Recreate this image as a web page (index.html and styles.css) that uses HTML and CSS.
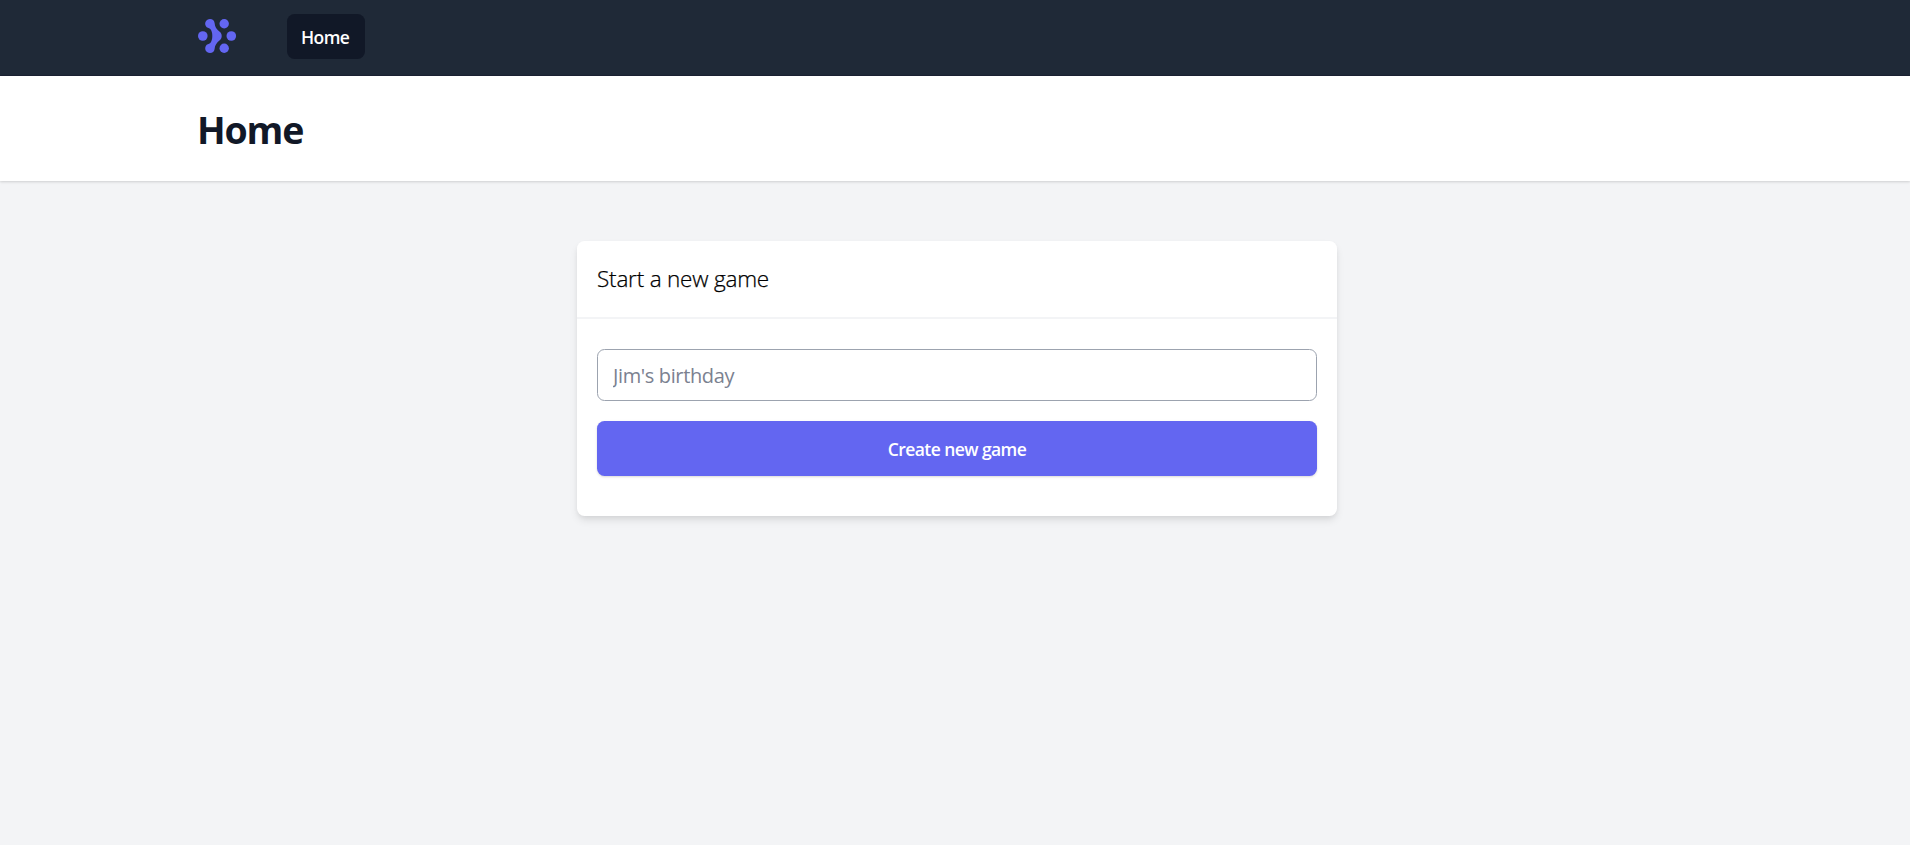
FILE: index.html
```html
<!DOCTYPE html>
<html lang="en">
<head>
<meta charset="utf-8">
<title>Home</title>
<link rel="stylesheet" href="styles.css">
</head>
<body>
<nav class="nav">
  <svg class="logo" viewBox="0 0 40 40" fill="currentColor" aria-hidden="true">
    <circle cx="4.8" cy="20" r="4.8"/>
    <circle cx="26.2" cy="7.7" r="4.7"/>
    <circle cx="33.3" cy="20" r="4.8"/>
    <circle cx="26.2" cy="32.3" r="4.7"/>
    <path d="M7.8 10C6.2 7 8 3 12 3C14.5 3 16.3 4.6 16.6 7C16.9 11 18.500 13 22 16C23.100 17 23.700 18.300 23.700 20S23.100 23 22 24C18.500 27 16.900 29 16.600 33C16.300 35.400 14.500 37 12 37C8 37 6.200 33 7.800 30C8.900 28 10.800 28.200 12.300 27C15 24.500 15 15.500 12.300 13C10.800 11.800 8.900 12 7.800 10Z"/>
  </svg>
  <a class="nav-link" href="#">Home</a>
</nav>
<header class="header"><h1 class="title">Home</h1></header>
<main class="main">
  <section class="card">
    <h2 class="card-title">Start a new game</h2>
    <form class="form">
      <input class="field" type="text" placeholder="Jim's birthday">
      <button class="button" type="button"><span class="label">Create new game</span></button>
    </form>
  </section>
</main>
</body>
</html>
```
FILE: styles.css
```css
* { box-sizing: border-box; margin: 0; }
body { min-height: 100vh; background: #f3f4f6; color: #000; font-family: "Open Sans", "Noto Sans", sans-serif; }
.nav { display: flex; align-items: flex-start; height: 76px; padding: 14px 198px 0; background: #1f2937; border-bottom: 1px solid #1c2233; }
.logo { width: 40px; height: 40px; margin: 2px 49px 0 0; color: #6366f1; }
.nav-link { width: 78px; height: 45px; padding-left: 14px; border-radius: 7.5px; background: #111827; color: #fff; font-size: 17.5px; font-weight: 600; line-height: 47px; letter-spacing: -.6px; text-decoration: none; }
.header { position: relative; height: 105px; padding: 29px 197px; background: #fff; box-shadow: 0 1px 3px rgba(0,0,0,.1), 0 1px 2px rgba(0,0,0,.06); }
.title { color: #111827; font-size: 37.5px; font-weight: 700; line-height: 50px; letter-spacing: -1.2px; }
.main { padding: 60px 0 0 577px; }
.card { width: 760px; height: 275px; border-radius: 7.5px; background: #fff; box-shadow: 0 5px 8px -1px rgba(0,0,0,.1), 0 2px 5px -1px rgba(0,0,0,.06); }
.card-title { height: 78px; padding: 19px 20px; border-bottom: 2px solid #f3f4f6; font-size: 22.5px; font-weight: 300; line-height: 37px; letter-spacing: -.2px; -webkit-text-stroke: .25px #000; }
.form { display: grid; gap: 20px; padding: 30px 20px; }
.field { width: 100%; height: 52px; padding: 0 15px; border: 1px solid #9ca3af; border-radius: 7.5px; background: #fff; font: 400 20px "Open Sans", "Noto Sans", sans-serif; letter-spacing: -.37px; }
.field::placeholder { color: #7b8190; opacity: 1; }
.button { height: 55px; padding: 0; border: 0; border-radius: 7.5px; background: #6366f1; color: #fff; font: 600 17.5px "Open Sans", "Noto Sans", sans-serif; letter-spacing: -.57px; box-shadow: 0 1px 3px rgba(0,0,0,.1), 0 1px 2px rgba(0,0,0,.06); }
```
